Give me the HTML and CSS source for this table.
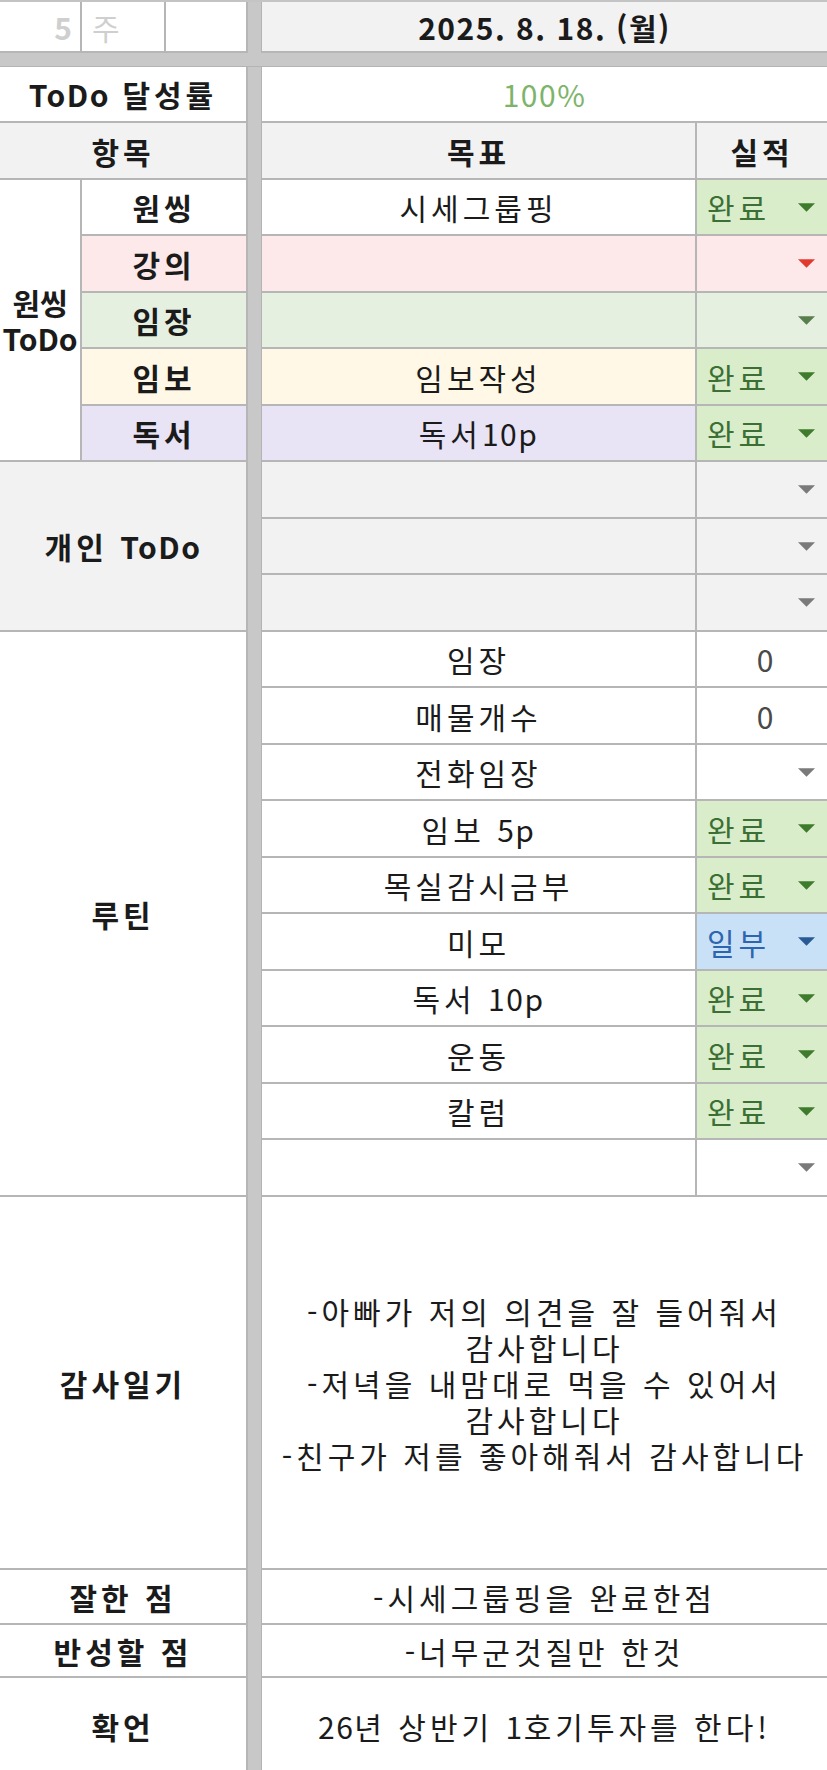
FILE: index.html
```html
<!DOCTYPE html>
<html lang="ko">
<head>
<meta charset="utf-8">
<title>ToDo</title>
<link rel="stylesheet" href="styles.css">
</head>
<body>
<div class="sheet">
  <div class="vsep"></div>
  <div class="hsep"></div>

  <div class="c wk-num">5</div>
  <div class="c wk-lab">주</div>
  <div class="c"></div>
  <div class="c g b last span2 en">2025. 8. 18. (월)</div>

  <div class="c b span3"><span><span class="en">ToDo</span> 달성률</span></div>
  <div class="c last span2 pct en">100%</div>

  <div class="c g b span3">항목</div>
  <div class="c g b">목표</div>
  <div class="c g b last">실적</div>

  <div class="c b onething"><div class="ol">원씽</div><div class="ol">ToDo</div></div>
  <div class="c b span2">원씽</div>
  <div class="c">시세그룹핑</div>
  <div class="c last st done"><span>완료</span><svg class="arr" viewBox="0 0 18 9"><polygon points="0,0 18,0 9,9"/></svg></div>

  <div class="c b span2 pink">강의</div>
  <div class="c pink"></div>
  <div class="c last st pink red"><svg class="arr" viewBox="0 0 18 9"><polygon points="0,0 18,0 9,9"/></svg></div>

  <div class="c b span2 mint">임장</div>
  <div class="c mint"></div>
  <div class="c last st mint olive"><svg class="arr" viewBox="0 0 18 9"><polygon points="0,0 18,0 9,9"/></svg></div>

  <div class="c b span2 cream">임보</div>
  <div class="c cream">임보작성</div>
  <div class="c last st done"><span>완료</span><svg class="arr" viewBox="0 0 18 9"><polygon points="0,0 18,0 9,9"/></svg></div>

  <div class="c b span2 lav">독서</div>
  <div class="c lav"><span>독서<span class="en">10p</span></span></div>
  <div class="c last st done"><span>완료</span><svg class="arr" viewBox="0 0 18 9"><polygon points="0,0 18,0 9,9"/></svg></div>

  <div class="c g b personal"><span>개인 <span class="en">ToDo</span></span></div>
  <div class="c g"></div>
  <div class="c g last st"><svg class="arr" viewBox="0 0 18 9"><polygon points="0,0 18,0 9,9"/></svg></div>
  <div class="c g"></div>
  <div class="c g last st"><svg class="arr" viewBox="0 0 18 9"><polygon points="0,0 18,0 9,9"/></svg></div>
  <div class="c g"></div>
  <div class="c g last st"><svg class="arr" viewBox="0 0 18 9"><polygon points="0,0 18,0 9,9"/></svg></div>

  <div class="c b routine">루틴</div>
  <div class="c">임장</div>
  <div class="c last num">0</div>
  <div class="c">매물개수</div>
  <div class="c last num">0</div>
  <div class="c">전화임장</div>
  <div class="c last st"><svg class="arr" viewBox="0 0 18 9"><polygon points="0,0 18,0 9,9"/></svg></div>
  <div class="c"><span>임보 <span class="en">5p</span></span></div>
  <div class="c last st done"><span>완료</span><svg class="arr" viewBox="0 0 18 9"><polygon points="0,0 18,0 9,9"/></svg></div>
  <div class="c">목실감시금부</div>
  <div class="c last st done"><span>완료</span><svg class="arr" viewBox="0 0 18 9"><polygon points="0,0 18,0 9,9"/></svg></div>
  <div class="c">미모</div>
  <div class="c last st part"><span>일부</span><svg class="arr" viewBox="0 0 18 9"><polygon points="0,0 18,0 9,9"/></svg></div>
  <div class="c"><span>독서 <span class="en">10p</span></span></div>
  <div class="c last st done"><span>완료</span><svg class="arr" viewBox="0 0 18 9"><polygon points="0,0 18,0 9,9"/></svg></div>
  <div class="c">운동</div>
  <div class="c last st done"><span>완료</span><svg class="arr" viewBox="0 0 18 9"><polygon points="0,0 18,0 9,9"/></svg></div>
  <div class="c">칼럼</div>
  <div class="c last st done"><span>완료</span><svg class="arr" viewBox="0 0 18 9"><polygon points="0,0 18,0 9,9"/></svg></div>
  <div class="c"></div>
  <div class="c last st"><svg class="arr" viewBox="0 0 18 9"><polygon points="0,0 18,0 9,9"/></svg></div>

  <div class="c b span3">감사일기</div>
  <div class="c last span2 diary">
    <div class="ln">-아빠가 저의 의견을 잘 들어줘서</div>
    <div class="ln">감사합니다</div>
    <div class="ln">-저녁을 내맘대로 먹을 수 있어서</div>
    <div class="ln">감사합니다</div>
    <div class="ln">-친구가 저를 좋아해줘서 감사합니다</div>
  </div>

  <div class="c b span3">잘한 점</div>
  <div class="c last span2">-시세그룹핑을 완료한점</div>

  <div class="c b span3">반성할 점</div>
  <div class="c last span2">-너무군것질만 한것</div>

  <div class="c b span3">확언</div>
  <div class="c last span2"><span><span class="en">26</span>년 상반기 <span class="en">1</span>호기투자를 한다!</span></div>
</div>
</body>
</html>
```

FILE: styles.css
```css
html, body {
  margin: 0;
  padding: 0;
  background: #ffffff;
}

body {
  width: 827px;
  height: 1770px;
  overflow: hidden;
  font-family: "Noto Sans CJK KR", "Noto Sans", sans-serif;
  font-size: 30px;
  letter-spacing: 4px;
  color: #1b1b1b;
}

.sheet {
  display: grid;
  grid-template-columns: 82px 84px 82px 14px 435px 130px;
  grid-template-rows: 51px 14px repeat(10, 56px 57px) 373px 55px 53px 98px;
  border-top: 2px solid #c4c4c4;
  background: #ffffff;
}

.vsep {
  grid-column: 4;
  grid-row: 1 / -1;
  background: #c8c8c8;
  border-right: 1px solid #b4b4b4;
}

.hsep {
  grid-column: 1 / -1;
  grid-row: 2;
  background: #c8c8c8;
  border-bottom: 1px solid #b4b4b4;
}

.c {
  box-sizing: border-box;
  border-right: 2px solid #b6b6b6;
  border-bottom: 2px solid #b6b6b6;
  display: flex;
  align-items: center;
  justify-content: center;
  text-align: center;
  line-height: 34px;
  white-space: nowrap;
  background: #ffffff;
}

.en { letter-spacing: 1.5px; }

.last { border-right: none; }

.b { font-weight: 700; }
.g { background: #f2f2f2; }

.span2 { grid-column: span 2; }
.span3 { grid-column: span 3; }

.wk-num {
  justify-content: flex-end;
  padding-right: 8px;
  color: #cfcfcf;
  font-weight: 700;
  letter-spacing: 0;
}

.wk-lab {
  justify-content: flex-start;
  padding-left: 10px;
  color: #cfcfcf;
}

.pct { color: #7db46a; }

.onething {
  grid-row: span 5;
  flex-direction: column;
  letter-spacing: 0;
}

.ol {
  line-height: 32px;
  margin: 2px 0;
}

.personal {
  grid-column: span 3;
  grid-row: span 3;
}

.routine {
  grid-column: span 3;
  grid-row: span 10;
}

.pink { background: #fde9e9; }
.mint { background: #e6f0e0; }
.cream { background: #fff8e6; }
.lav { background: #e8e4f6; }

.st {
  justify-content: space-between;
  padding: 0 12px 0 10px;
  fill: #7a7a7a;
}

.st .arr {
  width: 17px;
  height: 9px;
  margin-left: auto;
  display: block;
}

.done {
  background: #d9edcb;
  color: #3b6f33;
  fill: #3f7b2c;
}

.part {
  background: #c8e1f6;
  color: #2d65ae;
  fill: #2a5a94;
}

.red { fill: #e2392f; }
.olive { fill: #587e4e; }

.num {
  color: #4a4a4a;
  padding-left: 10px;
}

.diary {
  flex-direction: column;
}

.ln {
  line-height: 32px;
  margin: 2px 0;
}
```
